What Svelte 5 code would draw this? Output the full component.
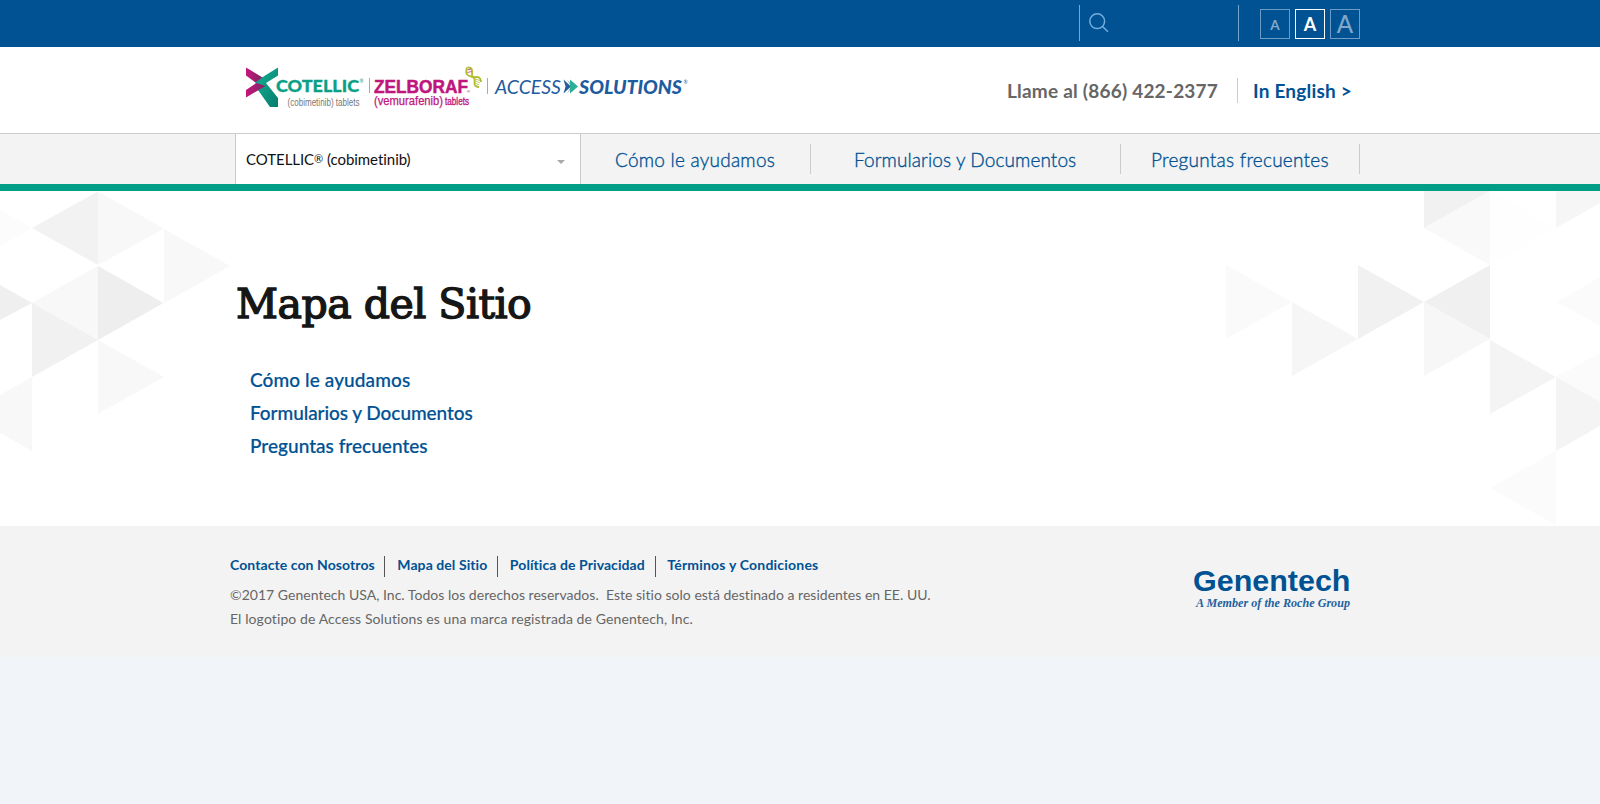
<script>
  const nav = [
    { label: 'Cómo le ayudamos', cls: 'n1' },
    { label: 'Formularios y Documentos', cls: 'n2' },
    { label: 'Preguntas frecuentes', cls: 'n3' }
  ];
  const footerLinks = ['Contacte con Nosotros', 'Mapa del Sitio', 'Política de Privacidad', 'Términos y Condiciones'];
  const triangles = [
    ['32,228 98,191.5 98,265', '#f2f2f2'], ['98,191.5 164,228.5 98,265', '#f8f8f8'],
    ['164,229 230,266 164,303', '#f8f8f8'], ['98,266 163.5,303 98,340', '#eeeeee'],
    ['98,266 32,303 98,340', '#f8f8f8'], ['32,303 98,340 32,377', '#f1f1f1'],
    ['98,340 164,377 98,414', '#f8f8f8'], ['32,377 32,451 0,433 0,395', '#f8f8f8'],
    ['0,285 32,303 0,320', '#efefef'], ['0,210 32,228 0,246', '#fcfcfc'],
    ['1424,191 1490,191 1424,228', '#f1f1f1'], ['1490,191 1490,265 1424,228', '#f9f9f9'],
    ['1490,191 1556,228 1490,265', '#fefefe'], ['1556,191 1600,191 1600,203 1556,228', '#f6f6f6'],
    ['1226,265 1292,302 1226,339', '#fafafa'], ['1292,302 1358,339 1292,376', '#f6f6f6'],
    ['1358,265 1424,302 1358,339', '#f1f1f1'], ['1490,265 1424,302 1490,339', '#f0f0f0'],
    ['1424,302 1490,339 1424,376', '#f7f7f7'], ['1490,340 1556,377 1490,414', '#f4f4f4'],
    ['1556,377 1600,401.5 1600,426 1556,451', '#f4f4f4'], ['1556,377 1600,353 1600,401.5', '#fbfbfb'],
    ['1557,302 1600,277 1600,326', '#fbfbfb'], ['1490,488 1556,451 1556,525', '#fbfbfb']
  ];
</script>

<div class="page">
  <div class="topbar">
    <div class="search">
      <svg width="20" height="20" viewBox="0 0 20 20"><circle cx="8.2" cy="8.2" r="7.4" /><path d="M13.5 13.5L19 18.7" /></svg>
    </div>
    <div class="sizes"><button class="s">A</button><button class="md">A</button><button class="l">A</button></div>
  </div>

  <header>
    <svg class="logo" width="455" height="56" viewBox="240 60 455 56">
      <defs>
        <linearGradient id="mg" x1="0" x2="1"><stop offset="0" stop-color="#c5157c" /><stop offset="1" stop-color="#7d2663" /></linearGradient>
        <linearGradient id="tl" x1="0" x2="1" y1="0" y2="1"><stop offset="0" stop-color="#13b296" /><stop offset="1" stop-color="#067c6c" /></linearGradient>
      </defs>
      <path fill="url(#tl)" d="M278 67.5V75.5L266 83L278 98V107H270L255.5 86.5V81.5Z" />
      <path fill="url(#mg)" d="M246 67.5L262.5 77.5L255.5 82.5L246 75.5Z" />
      <path fill="url(#mg)" d="M246 90L256.5 83L265.5 86L246 97.5Z" />
      <text x="276" y="92" font-size="17.5" fill="#0aa086" stroke="#0aa086" stroke-width=".3" font-family="Lato" font-weight="900" textLength="83" lengthAdjust="spacingAndGlyphs">COTELLIC</text>
      <text x="359.5" y="83" font-size="5" fill="#0aa086" font-family="Lato">®</text>
      <text x="287.5" y="105.5" font-size="11" fill="#777" font-family="Liberation Sans" textLength="72" lengthAdjust="spacingAndGlyphs">(cobimetinib) tablets</text>
      <path stroke="#aaa" d="M369.5 78V93M487.5 78V94" />
      <g font-family="Liberation Sans" font-weight="700" fill="#bf167c">
        <text x="374" y="92.5" font-size="18" stroke="#bf167c" stroke-width=".5" textLength="94" lengthAdjust="spacingAndGlyphs">ZELBORAF</text>
        <text x="467" y="93" font-size="4">®</text>
        <text x="374" y="104.7" font-size="12" font-weight="400" stroke="#bf167c" stroke-width=".25" textLength="69" lengthAdjust="spacingAndGlyphs">(vemurafenib)</text>
        <text x="445" y="104.5" font-size="10" font-weight="400" stroke="#bf167c" stroke-width=".35" textLength="24" lengthAdjust="spacingAndGlyphs">tablets</text>
      </g>
      <g fill="none" stroke="#b5bd35" stroke-width="1.9">
        <path d="M467 67.5C465 73 467 76 471 76.5S475 80 474.5 83S477 87 479 87" />
        <path d="M467.5 67.5C472 67 472.5 70 472 74S474 77 477 77S481 80 481 82" />
        <path stroke-width=".8" d="M473.5 78.5L480 80.5M474.5 80.5L480 83M475 83L479 85" />
      </g>
      <path stroke="#bf167c" stroke-width=".7" d="M467.5 70L471 69M467.5 72.5L471.5 71.5" />
      <text x="495" y="93.7" font-size="19.5" fill="#1d5c9f" font-family="Lato" font-style="italic" textLength="66" lengthAdjust="spacingAndGlyphs">ACCESS</text>
      <path fill="#2a5d9f" d="M563.5 79.5L571 86.5L563.5 93.5L565.5 86.5Z" /><path fill="#7fa3bb" d="M567 79.5L573 86.5L567 93.5L571 86.5Z" /><path fill="#2ab095" d="M570 79.5L578 86.5L570 93.5Z" />
      <text x="579" y="93.7" font-size="19.5" fill="#1d5c9f" font-family="Lato" font-style="italic" font-weight="900" textLength="103" lengthAdjust="spacingAndGlyphs">SOLUTIONS</text>
      <text x="683.5" y="83.5" font-size="5" fill="#1d5c9f" font-family="Lato">®</text>
    </svg>
    <div class="contact"><span class="phone">Llame al (866) 422-2377</span><a class="lang" href="#en">In English &gt;</a></div>
  </header>

  <nav>
    <div class="select"><span>COTELLIC<small>®</small> (cobimetinib)</span><i></i></div>
    {#each nav as n}<a class={n.cls} href="#nav">{n.label}</a>{/each}
  </nav>

  <main>
    <svg class="pattern" width="1600" height="335" viewBox="0 191 1600 335">
      {#each triangles as [points, fill]}<polygon {points} {fill} />{/each}
    </svg>
    <h1>Mapa del Sitio</h1>
    <ul>{#each nav as n}<li><a class="{n.cls}-map" href="#map">{n.label}</a></li>{/each}</ul>
  </main>

  <footer>
    <div class="legal">
      <div class="flinks">{#each footerLinks as l}<a href="#footer">{l}</a>{/each}</div>
      <p>©2017 Genentech USA, Inc. Todos los derechos reservados.&nbsp; Este sitio solo está destinado a residentes en EE. UU.</p>
      <p class="mark">El logotipo de Access Solutions es una marca registrada de Genentech, Inc.</p>
    </div>
    <svg class="gene" width="170" height="60" viewBox="1188 556 170 60">
      <text x="1193" y="590.5" font-size="29.5" font-weight="700" fill="#005293" font-family="Liberation Sans" textLength="157.5" lengthAdjust="spacingAndGlyphs">Genentech</text>
      <text x="1196" y="606.5" font-size="13" font-weight="700" font-style="italic" fill="#1d62a0" font-family="Liberation Serif" textLength="154" lengthAdjust="spacingAndGlyphs">A Member of the Roche Group</text>
    </svg>
  </footer>
</div>

<style>
  :global(body) { background: #f1f5fa; font-family: Lato, sans-serif; font-variant-ligatures: none; }
  a { color: #005293; text-decoration: none; white-space: nowrap; }
  .topbar { height: 47px; background: #005293; display: flex; padding-left: 1079px; box-sizing: border-box; }
  .search { width: 149px; height: 28px; margin-top: 5px; border: solid #76a6cf; border-width: 0 1px; padding: 8px 0 0 9px; }
  .search svg { fill: none; stroke: #76aede; stroke-width: 1.5; display: block; }
  .sizes { display: flex; gap: 5px; padding: 9px 0 0 21px; }
  button { width: 30px; height: 30px; box-sizing: border-box; border: 1px solid #6c9cc5; background: none; color: #7fa8cb; font-family: Lato, sans-serif; padding: 0; line-height: 28px; }
  .s { font-size: 13.5px; font-weight: 700; padding-top: 1px; }
  .md { font-size: 18px; border-color: #fff; color: #fff; padding-top: 0; font-weight: 700; }
  .l { font-size: 24px; font-weight: 500; }
  header { height: 86px; background: #fff; display: flex; justify-content: space-between; padding-left: 240px; }
  .logo { margin-top: 13px; }
  .contact { width: 593px; display: flex; padding-top: 31px; height: 25px; line-height: 26px; font-size: 19px; font-weight: 700; }
  .phone { color: #666; width: 230px; letter-spacing: .21px; white-space: nowrap; }
  .lang { border-left: 1px solid #ccc; padding-left: 15px; letter-spacing: .2px; }
  nav { height: 58px; box-sizing: border-box; border-top: 1px solid #ccc; border-bottom: 7px solid #009e87; background: #f3f3f3; display: flex; padding-left: 235px; }
  .select { width: 334px; padding-left: 10px; border: solid #ccc; border-width: 0 1px; background: #fff; font-size: 15px; line-height: 50px; letter-spacing: -.05px; display: flex; color: #111; justify-content: space-between; }
  .select small { font-size: 11px; position: relative; top: -2px; line-height: 0; }
  .select i { border: 4px solid transparent; border-top-color: #aaa; border-bottom: 0; margin: 26px 15px 0 0; height: 0; }
  nav a { height: 30px; margin-top: 10px; line-height: 31px; border-right: 1px solid #ccc; font-size: 19px; font-weight: 300; box-sizing: border-box; -webkit-text-stroke: .35px #005293; }
  .n1 { width: 230px; padding-left: 34px; letter-spacing: .24px; }
  .n2 { width: 310px; padding-left: 43px; letter-spacing: .1px; }
  .n3 { width: 239px; padding-left: 30px; letter-spacing: .24px; }
  main { height: 335px; background: #fff; box-sizing: border-box; position: relative; padding: 83px 0 0 236px; }
  .pattern { position: absolute; inset: 0; }
  h1 { position: relative; margin: 0; font: 400 41px/60px "DejaVu Serif", serif; letter-spacing: -.5px; color: #161616; -webkit-text-stroke: 1.4px #161616; }
  ul { position: relative; list-style: none; margin: 27px 0 0; padding: 2px 0 0 14px; }
  li { line-height: 33px; font-size: 19px; font-weight: 500; -webkit-text-stroke: .2px #005293; }
  .n1-map { letter-spacing: .1px; }
  .n2-map { letter-spacing: -.06px; }
  .n3-map { letter-spacing: .02px; }
  footer { height: 131px; background: #f3f3f3; display: flex; padding-left: 230px; }
  .legal { width: 958px; padding-top: 30px; }
  .flinks { display: flex; height: 21px; line-height: 18px; font-size: 14px; font-weight: 700; letter-spacing: .08px; }
  .flinks a + a { border-left: 1px solid #555; padding-left: 12px; margin-left: 9.5px; }
  .flinks a:last-child { letter-spacing: .2px; padding-left: 11px; margin-left: 10.5px; }
  p { margin: 0; font-size: 14px; line-height: 24px; letter-spacing: .02px; color: #666; }
  .flinks + p { margin-top: 6px; }
  .mark { letter-spacing: .1px; }
  .gene { margin-top: 30px; }
</style>
